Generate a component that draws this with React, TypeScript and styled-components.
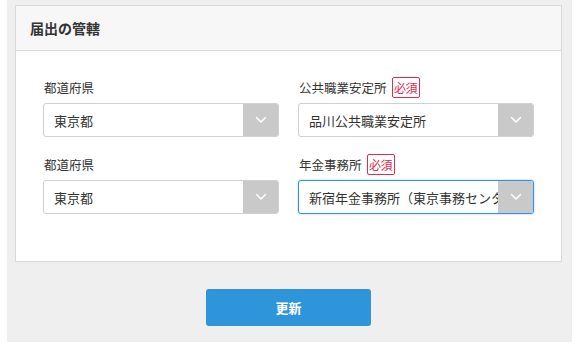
import React from 'react';
import styled, { createGlobalStyle } from 'styled-components';

const GlobalStyle = createGlobalStyle`
  html, body {
    margin: 0;
    padding: 0;
    background: #ffffff;
  }
  body {
    font-family: "Noto Sans CJK JP", "Noto Sans", sans-serif;
    color: #333333;
  }
`;

type Field = {
  label: string;
  value: string;
  required?: boolean;
  focused?: boolean;
};

const fields: Field[] = [
  { label: '都道府県', value: '東京都' },
  { label: '公共職業安定所', value: '品川公共職業安定所', required: true },
  { label: '都道府県', value: '東京都' },
  { label: '年金事務所', value: '新宿年金事務所（東京事務センター）', required: true, focused: true },
];

const Chevron = () => (
  <svg width="12" height="8" viewBox="0 0 12 8" fill="none">
    <path d="M1.5 1.5L6 6L10.5 1.5" stroke="#ffffff" strokeWidth="1.5" strokeLinecap="round" strokeLinejoin="round" />
  </svg>
);

const App = () => {
  return (
    <>
      <GlobalStyle />
      <Page>
        <Panel>
          <PanelHeader>
            <Title>届出の管轄</Title>
          </PanelHeader>
          <PanelBody>
            {fields.map((f, i) => (
              <FieldWrap key={i}>
                <LabelRow>
                  <Label>{f.label}</Label>
                  {f.required && <Badge>必須</Badge>}
                </LabelRow>
                <Select $focused={f.focused}>
                  <SelectText>{f.value}</SelectText>
                  <Arrow>
                    <Chevron />
                  </Arrow>
                </Select>
              </FieldWrap>
            ))}
          </PanelBody>
        </Panel>
        <ButtonRow>
          <SubmitButton>更新</SubmitButton>
        </ButtonRow>
      </Page>
    </>
  );
};

export default App;

const Page = styled.div`
  width: 565px;
  height: 342px;
  margin: 0 0 0 7px;
  padding: 5px 10px 0 8px;
  box-sizing: border-box;
  background-color: #efefef;
`;

const Panel = styled.section`
  background-color: #ffffff;
  border: 1px solid #d9d9d9;
`;

const PanelHeader = styled.div`
  height: 44px;
  display: flex;
  align-items: center;
  padding: 0 14px;
  background-color: #f7f7f7;
  border-bottom: 1px solid #d9d9d9;
`;

const Title = styled.h2`
  margin: 0;
  font-size: 14px;
  font-weight: 700;
  color: #333333;
`;

const PanelBody = styled.div`
  display: grid;
  grid-template-columns: 236px 236px;
  column-gap: 19px;
  row-gap: 16px;
  padding: 25px 27px 47px 27px;
`;

const FieldWrap = styled.div`
  display: flex;
  flex-direction: column;
`;

const LabelRow = styled.div`
  height: 22px;
  display: flex;
  align-items: center;
  margin-bottom: 5px;
`;

const Label = styled.span`
  font-size: 12.5px;
  color: #333333;
  padding-left: 1px;
`;

const Badge = styled.span`
  display: inline-flex;
  align-items: center;
  justify-content: center;
  width: 28px;
  height: 21px;
  box-sizing: border-box;
  margin-left: 5px;
  border: 1px solid #e02a4f;
  border-radius: 2px;
  color: #e02a4f;
  font-size: 12px;
  letter-spacing: -0.5px;
  background: #ffffff;
`;

const Select = styled.div<{ $focused?: boolean }>`
  position: relative;
  height: 34px;
  box-sizing: border-box;
  display: flex;
  align-items: center;
  border: 1px solid ${(p) => (p.$focused ? '#3b8ded' : '#d0d0d0')};
  border-radius: 3px;
  box-shadow: ${(p) => (p.$focused ? '0 0 2px rgba(59, 141, 237, 0.6)' : 'none')};
  background: #ffffff;
  overflow: hidden;
`;

const SelectText = styled.span`
  flex: 1;
  padding-left: 10px;
  font-size: 13px;
  color: #333333;
  white-space: nowrap;
  overflow: hidden;
`;

const Arrow = styled.span`
  position: absolute;
  top: 0;
  right: 0;
  bottom: 0;
  width: 35px;
  display: flex;
  align-items: center;
  justify-content: center;
  background-color: #c9c9c9;
`;

const ButtonRow = styled.div`
  display: flex;
  justify-content: center;
  padding-top: 27px;
`;

const SubmitButton = styled.button`
  width: 165px;
  height: 37px;
  border: none;
  border-radius: 3px;
  background-color: #2e95db;
  color: #ffffff;
  font-family: "Noto Sans CJK JP", "Noto Sans", sans-serif;
  font-size: 13px;
  font-weight: 700;
  cursor: pointer;
`;
